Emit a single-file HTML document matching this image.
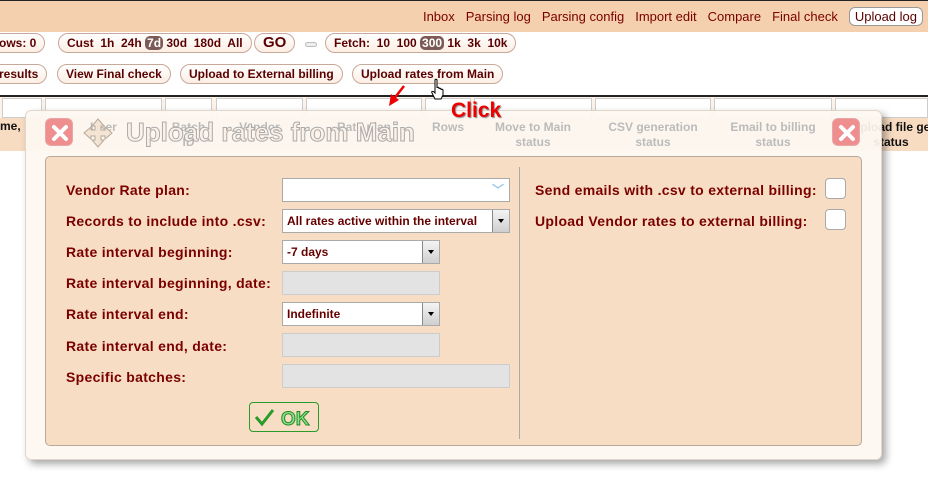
<!DOCTYPE html>
<html><head><meta charset="utf-8">
<style>
*{box-sizing:border-box;margin:0;padding:0}
body{width:928px;height:488px;overflow:hidden;background:#fff;font-family:"Liberation Sans",Arial,sans-serif;position:relative;color:#800000}
.a{position:absolute}
.top{left:0;top:0;width:928px;height:32px;background:#f5d0ae;border-top:1px solid #222}
.nav{right:5px;top:7px;font-size:13px;color:#7a0000;display:flex;gap:11px;align-items:center}
.nav span{white-space:nowrap}
.nav .cur{background:#fff;border:1px solid #999;border-radius:6px;padding:1px 5px;color:#5a0000}
.pill{border:1px solid #c8a898;border-radius:10px;background:linear-gradient(#fff,#fbeee4);font-size:12px;font-weight:bold;color:#5a0000;height:20px;line-height:18px;padding:0 8px;white-space:nowrap}
.sel{background:#7c5a55;color:#fff;border-radius:5px;padding:0 2px}
.hdr{top:95px;left:0;width:928px;height:2px;background:#222}
.cell{border:1px solid #ccc;background:#fff}
.th{font-size:12px;font-weight:bold;color:#bbb;text-align:center;line-height:15px}
.dlg{left:25px;top:110px;width:857px;height:350px;background:rgba(253,247,241,0.93);border:1px solid #e2d6cc;border-radius:6px;box-shadow:4px 4px 8px rgba(0,0,0,.35)}
.panel{left:45px;top:156px;width:817px;height:290px;background:#f7ddc3;border:1px solid #b9a99b;border-radius:5px}
.lbl{font-size:14px;font-weight:bold;color:#7a0000;white-space:nowrap;letter-spacing:.3px}
.inp{background:#fff;border:1px solid #aaa;height:24px;font-size:12px;color:#600;line-height:22px;padding-left:4px;font-weight:bold}
.dis{background:#e3e3e3;border:1px solid #ccc;height:24px}
.dd{position:absolute;right:0;top:0;width:17px;height:22px;background:linear-gradient(#f4f4f4,#cfcfcf);border-left:1px solid #888}
.dd:after{content:"";position:absolute;left:5px;top:9px;border-left:3px solid transparent;border-right:3px solid transparent;border-top:4px solid #000}
.xbtn{width:28px;height:28px;border-radius:6px;background:#ef8e8e;border:1px solid #e9a6a6}
.chk{width:21px;height:21px;border:1px solid #aaa;border-radius:4px;background:#fff}
</style></head><body>
<div class="a top"></div>
<div class="a nav"><span>Inbox</span><span>Parsing log</span><span>Parsing config</span><span>Import edit</span><span>Compare</span><span>Final check</span><span class="cur">Upload log</span></div>

<div class="a pill" style="left:-10px;top:33px">ows: 0</div>
<div class="a pill" style="left:58px;top:33px">Cust&nbsp; 1h&nbsp; 24h <span class="sel">7d</span> 30d&nbsp; 180d&nbsp; All</div>
<div class="a pill" style="left:254px;top:33px;font-size:15px;padding:0 8px">GO</div>
<div class="a" style="left:305px;top:42px;width:12px;height:5px;border:1px solid #bbb;border-radius:3px;background:#eee"></div>
<div class="a pill" style="left:325px;top:33px">Fetch:&nbsp; 10&nbsp; 100 <span class="sel">300</span> 1k&nbsp; 3k&nbsp; 10k</div>

<div class="a pill" style="left:-10px;top:64px">results</div>
<div class="a pill" style="left:57px;top:64px">View Final check</div>
<div class="a pill" style="left:180px;top:64px">Upload to External billing</div>
<div class="a pill" style="left:352px;top:64px">Upload rates from Main</div>

<div class="a hdr"></div>
<div class="a" style="left:0;top:97px;width:928px;height:54px;background:#fdf2e8"></div>
<div class="a" style="left:0;top:118px;width:928px;height:33px;background:#f7dcc2"></div>
<div class="a cell" style="left:2px;top:98px;width:40px;height:20px"></div>
<div class="a cell" style="left:45px;top:98px;width:117px;height:20px"></div>
<div class="a cell" style="left:165px;top:98px;width:47px;height:20px"></div>
<div class="a cell" style="left:216px;top:98px;width:87px;height:20px"></div>
<div class="a cell" style="left:306px;top:98px;width:116px;height:20px"></div>
<div class="a cell" style="left:425px;top:98px;width:46px;height:20px"></div>
<div class="a cell" style="left:474px;top:98px;width:118px;height:20px"></div>
<div class="a cell" style="left:595px;top:98px;width:116px;height:20px"></div>
<div class="a cell" style="left:714px;top:98px;width:118px;height:20px"></div>
<div class="a cell" style="left:835px;top:98px;width:93px;height:20px"></div>
<div class="a lbl" style="left:0;top:119px;font-size:12px;color:#111;letter-spacing:0">me,</div>
<div class="a th" style="left:836px;top:120px;width:110px;color:#111">Upload file ge<br>status</div>

<div class="a dlg"></div>
<div class="a th" style="left:45px;top:120px;width:117px">User</div>
<div class="a th" style="left:165px;top:120px;width:47px">Batch<br>ID</div>
<div class="a th" style="left:216px;top:120px;width:87px">Vendor</div>
<div class="a th" style="left:306px;top:120px;width:116px">Rate plan</div>
<div class="a th" style="left:425px;top:120px;width:46px">Rows</div>
<div class="a th" style="left:474px;top:120px;width:118px">Move to Main<br>status</div>
<div class="a th" style="left:595px;top:120px;width:116px">CSV generation<br>status</div>
<div class="a th" style="left:714px;top:120px;width:118px">Email to billing<br>status</div>

<div class="a xbtn" style="left:45px;top:118px"><svg width="28" height="28"><path d="M8 8L20 20M20 8L8 20" stroke="#fff" stroke-width="4" stroke-linecap="round"/></svg></div>
<div class="a xbtn" style="left:832px;top:118px"><svg width="28" height="28"><path d="M8 8L20 20M20 8L8 20" stroke="#fff" stroke-width="4" stroke-linecap="round"/></svg></div>
<svg class="a" style="left:83px;top:118px" width="30" height="30"><path d="M15 1L21 8H18V12H22V9L29 15L22 21V18H18V22H21L15 29L9 22H12V18H8V21L1 15L8 9V12H12V8H9Z" fill="#f4e4d4" stroke="#b8a898"/></svg>
<div class="a" style="left:126px;top:117px;font-size:26px;font-weight:bold;color:#fbf1e6;-webkit-text-stroke:1px #aaa;white-space:nowrap">Upload rates from Main</div>

<svg class="a" style="left:385px;top:80px" width="130" height="45"><line x1="19" y1="6" x2="8" y2="20" stroke="#e00" stroke-width="2.5"/><path d="M4 26 L6 14 L14 20 Z" fill="#e00"/><text x="66" y="37" font-family="Liberation Sans" font-weight="bold" font-size="21" fill="#e00" style="text-shadow:1px 1px 1px #888">Click</text></svg>
<svg class="a" style="left:430px;top:78px" width="18" height="24"><path d="M5 2C5 1 7 1 7 2V10C7 9 9 9 9 10V11C9 10 11 10 11 11V12C11 11 13 11 13 12V17L11 21H5L2 15C1 13 3 13 4 14L5 15Z" fill="#fff" stroke="#000" stroke-width="1"/></svg>

<div class="a panel"></div>
<div class="a" style="left:519px;top:167px;width:1px;height:272px;background:#aaa"></div>

<div class="a lbl" style="left:66px;top:182px">Vendor Rate plan:</div>
<div class="a inp" style="left:282px;top:178px;width:228px"><span style="position:absolute;right:5px;top:0;color:#9cc8e8;font-size:12px">﹀</span></div>
<div class="a lbl" style="left:66px;top:213px">Records to include into .csv:</div>
<div class="a inp" style="left:282px;top:209px;width:228px">All rates active within the interval<div class="dd"></div></div>
<div class="a lbl" style="left:66px;top:244px">Rate interval beginning:</div>
<div class="a inp" style="left:282px;top:240px;width:158px">-7 days<div class="dd"></div></div>
<div class="a lbl" style="left:66px;top:275px">Rate interval beginning, date:</div>
<div class="a dis" style="left:282px;top:271px;width:158px"></div>
<div class="a lbl" style="left:66px;top:306px">Rate interval end:</div>
<div class="a inp" style="left:282px;top:302px;width:158px">Indefinite<div class="dd"></div></div>
<div class="a lbl" style="left:66px;top:338px">Rate interval end, date:</div>
<div class="a dis" style="left:282px;top:333px;width:158px"></div>
<div class="a lbl" style="left:66px;top:369px">Specific batches:</div>
<div class="a dis" style="left:282px;top:364px;width:228px"></div>

<div class="a" style="left:249px;top:402px;width:70px;height:30px;border:1px solid #2a9a2a;border-radius:4px;background:#f7ddc3"><svg width="68" height="28"><path d="M6 14L12 21L23 7" fill="none" stroke="#2a9a2a" stroke-width="3"/><text x="31" y="22" font-family="Liberation Sans" font-weight="bold" font-size="19" fill="#8fdf8f" stroke="#1e8a1e" stroke-width="1">OK</text></svg></div>

<div class="a lbl" style="left:535px;top:182px">Send emails with .csv to external billing:</div>
<div class="a chk" style="left:825px;top:178px"></div>
<div class="a lbl" style="left:535px;top:213px">Upload Vendor rates to external billing:</div>
<div class="a chk" style="left:825px;top:209px"></div>
</body></html>
